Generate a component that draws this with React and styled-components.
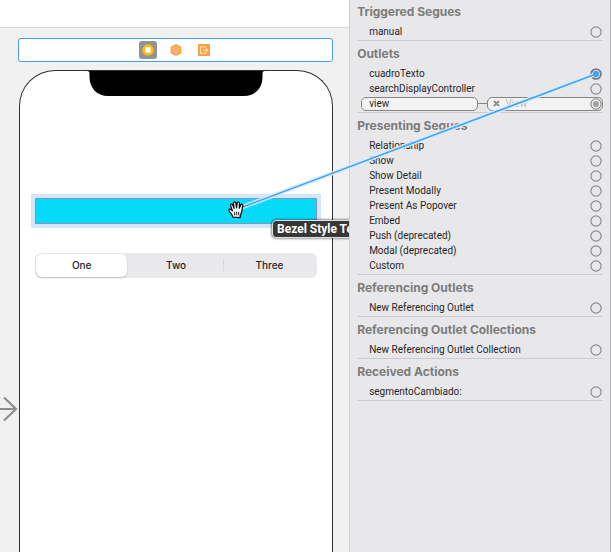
import React, { useState } from "react";
import styled, { createGlobalStyle, css } from "styled-components";

const GlobalStyle = createGlobalStyle`
  *, *::before, *::after { box-sizing: border-box; }
  body {
    margin: 0;
    font-family: Inter, "Liberation Sans", sans-serif;
    color: #262626;
    background: #f1f1f1;
  }
  button, input { font: inherit; color: inherit; }
`;

const Page = styled.div`
  position: relative;
  display: grid;
  grid-template-columns: minmax(0, 4fr) minmax(0, 3fr);
  min-height: 100vh;
  overflow: hidden;
`;

/* ---------- Canvas ---------- */

const Canvas = styled.main`
  position: relative;
  display: flex;
  flex-direction: column;
  overflow: hidden;
  background: #f1f1f1;
`;

const TopStrip = styled.div`
  height: 28px;
  background: #fff;
  border-bottom: 1px solid #dcdcdc;
`;

const Scene = styled.section`
  flex: 1;
  display: flex;
  flex-direction: column;
  gap: 8px;
  padding: 10px 16px 0 18px;
`;

const Dock = styled.div`
  display: flex;
  align-items: center;
  justify-content: center;
  gap: 10px;
  height: 24px;
  background: #fff;
  border: 1px solid #4a9bf5;
  border-radius: 3px;
`;

const DockButton = styled.button`
  display: grid;
  place-items: center;
  width: 18px;
  height: 18px;
  padding: 0;
  border: 0;
  border-radius: 3px;
  background: ${(p) => (p.$selected ? "#929292" : "transparent")};
`;

const Phone = styled.div`
  flex: 1;
  display: flex;
  flex-direction: column;
  margin-left: 1px;
  background: #fff;
  border: 1px solid #303030;
  border-bottom: 0;
  border-radius: 36px 36px 0 0;
`;

const Notch = styled.svg`
  display: block;
  align-self: center;
`;

const PhoneContent = styled.div`
  display: flex;
  flex-direction: column;
  gap: 29px;
  padding: 102px 15px 0;
`;

const FieldHolder = styled.div`
  position: relative;
`;

const BezelField = styled.input`
  display: block;
  width: 100%;
  height: 26px;
  padding: 0 6px;
  background: #05dbf9;
  border: 1px solid #7d99bd;
  border-radius: 0;
  outline: 4px solid #d6e5fb;
`;

const Tooltip = styled.div`
  position: absolute;
  top: 22px;
  left: 237px;
  padding: 0 4px;
  font-family: Roboto, "Liberation Sans", sans-serif;
  font-size: 12px;
  line-height: 16px;
  font-weight: 700;
  white-space: nowrap;
  color: #fff;
  background: #373737;
  border: 1px solid #e2e2e2;
  border-radius: 4px;
  box-shadow: 0 0 2px 1px rgba(0, 0, 0, 0.4);
`;

const Segments = styled.div`
  display: grid;
  grid-template-columns: repeat(3, 1fr);
  height: 25px;
  padding: 1px;
  background: #e9e9eb;
  border-radius: 6px;
`;

const Segment = styled.label`
  display: grid;
  place-items: center;
  padding-bottom: 1px;
  font-size: 10px;
  font-weight: 500;
  line-height: 14px;
  border-radius: 6px;
  ${(p) =>
    p.$selected &&
    css`
      margin-right: 2px;
      background: #fff;
      box-shadow: 0 1px 2px rgba(0, 0, 0, 0.2);
    `}
  ${(p) =>
    p.$divided &&
    css`
      background: linear-gradient(#dadadd, #dadadd) left center / 1px 13px no-repeat;
    `}
`;

const HiddenRadio = styled.input`
  position: absolute;
  opacity: 0;
  pointer-events: none;
`;

const EntryArrow = styled.svg`
  position: absolute;
  left: 0;
  top: 395px;
`;

/* ---------- Inspector ---------- */

const Inspector = styled.aside`
  padding: 0 8px 0 7px;
  margin-top: -1px;
  font-family: Roboto, "Liberation Sans", sans-serif;
  background: #e8e8ea;
  border-left: 1px solid #cfcfd1;
  border-right: 1px solid #b4b4b6;
`;

const Group = styled.section`
  display: flex;
  flex-direction: column;
`;

const GroupTitle = styled.h2`
  margin: 0;
  font-family: Inter, "Liberation Sans", sans-serif;
  font-size: 12px;
  line-height: 25px;
  font-weight: 700;
  color: #7b7b7b;
  white-space: nowrap;
`;

const Rows = styled.ul`
  margin: 0 0 0 1px;
  padding: 0 0 1px;
  list-style: none;
  border-bottom: 1px solid #cbcbcd;
`;

const Row = styled.li`
  display: flex;
  align-items: center;
  justify-content: space-between;
  height: 15px;
  padding-left: 11px;
  font-size: 10px;
  line-height: 14px;
`;

const LinkedRow = styled(Row)`
  display: grid;
  grid-template-columns: minmax(0, 1fr) 9px minmax(0, 1fr);
  padding-left: 3px;
  margin-right: -1px;
`;

const Pill = styled.div`
  display: flex;
  align-items: center;
  gap: 6px;
  height: 14px;
  padding: 0 0 0 ${(p) => (p.$target ? "5px" : "7px")};
  background: #f3f3f3;
  border: 1px solid #858585;
  border-radius: 5px;
  color: ${(p) => (p.$target ? "#b9b9b9" : "inherit")};
`;

const PillText = styled.span`
  flex: 1;
`;

const Connector = styled.span`
  height: 1px;
  background: #858585;
`;

const IconButton = styled.button`
  display: grid;
  place-items: center;
  flex: none;
  padding: 0;
  border: 0;
  background: none;
`;

const DragLine = styled.svg`
  position: absolute;
  top: 0;
  left: 0;
  pointer-events: none;
`;

/* ---------- Drawings ---------- */

function ControllerIcon() {
  return (
    <svg width="14" height="14" viewBox="0 0 14 14" aria-hidden="true">
      <circle cx="7" cy="7" r="5.8" fill="#fdbc0b" />
      <rect x="4.3" y="4.2" width="5.4" height="5.6" rx="0.6" fill="#fff" />
    </svg>
  );
}

function CubeIcon() {
  return (
    <svg width="14" height="14" viewBox="0 0 14 14" aria-hidden="true">
      <path d="M7 1 12.3 3.7V10.2L7 13 1.7 10.2V3.7Z" fill="#f9a040" />
      <path
        d="M3.3 5.1 6.2 6.5V11M10.7 5.1 7.8 6.5V11M4.2 9.3V7.2M9.8 9.3V7.2M4.5 3.8 7 5 9.5 3.8"
        fill="none"
        stroke="#fdd6a8"
        strokeWidth="0.9"
      />
    </svg>
  );
}

function ExitIcon() {
  return (
    <svg width="14" height="14" viewBox="0 0 14 14" aria-hidden="true">
      <rect x="1" y="1" width="12" height="12" rx="0.8" fill="#f9a040" />
      <path
        d="M8.6 5.2V3.8H3.6V10.4H8.6V9M6 7.1H11M9.3 5.3 11.1 7.1 9.3 8.9"
        fill="none"
        stroke="#fee0bb"
        strokeWidth="1.1"
      />
    </svg>
  );
}

function Ring({ state }) {
  const active = state === "active";
  return (
    <svg width="12" height="12" viewBox="0 0 12 12" aria-hidden="true">
      <circle
        cx="6"
        cy="6"
        r={active ? 4.9 : 5.1}
        fill={active ? "#e8e8ea" : "none"}
        stroke={active ? "#77797c" : "#8b8b8d"}
        strokeWidth={active ? 1.9 : 1.2}
      />
      {active && <circle cx="6" cy="6" r="3" fill="#3aa9fb" />}
      {state === "linked" && <circle cx="6" cy="6" r="3.1" fill="#a3a3a3" />}
    </svg>
  );
}

function HandCursor() {
  return (
    <g transform="translate(228 201)">
      <path
        d="M5.2 16.2C4.4 13.8 2.2 11.6 1 9.6 0.3 8.2 1.8 7.5 3 8.5L4.4 9.8 2.6 4.6C2.1 3 4 2.4 4.6 3.8L6.1 7.3 5.5 2.2C5.3.5 7.4.3 7.8 1.9L8.6 6.8 9.2 2C9.4.5 11.4.7 11.4 2.3L11.3 7.2 12.7 4C13.3 2.6 15.1 3.2 14.8 4.7 14.2 7.4 14.2 9.8 13.2 12.2L12.2 14.2V16.6Z"
        fill="#fff"
        stroke="#000"
        strokeWidth="1.2"
        strokeLinejoin="round"
      />
      <path d="M6.6 10.8V14.3M8.7 10.8V14.3M10.7 10.8V14.3" stroke="#000" strokeWidth="0.9" />
    </g>
  );
}

/* ---------- Page ---------- */

const groups = [
  { title: "Triggered Segues", rows: [{ name: "manual" }] },
  {
    title: "Outlets",
    rows: [
      { name: "cuadroTexto", state: "active" },
      { name: "searchDisplayController" },
      { name: "view", state: "linked", target: "View" },
    ],
  },
  {
    title: "Presenting Segues",
    rows: [
      { name: "Relationship" },
      { name: "Show" },
      { name: "Show Detail" },
      { name: "Present Modally" },
      { name: "Present As Popover" },
      { name: "Embed" },
      { name: "Push (deprecated)" },
      { name: "Modal (deprecated)" },
      { name: "Custom" },
    ],
  },
  { title: "Referencing Outlets", rows: [{ name: "New Referencing Outlet" }] },
  {
    title: "Referencing Outlet Collections",
    rows: [{ name: "New Referencing Outlet Collection" }],
  },
  { title: "Received Actions", rows: [{ name: "segmentoCambiado:" }] },
];

const segments = ["One", "Two", "Three"];

function ConnectionRow({ name, state, target }) {
  const ring = (
    <IconButton type="button" aria-label={`Connect ${name}`}>
      <Ring state={state} />
    </IconButton>
  );
  if (!target) {
    return (
      <Row>
        <span>{name}</span>
        {ring}
      </Row>
    );
  }
  return (
    <LinkedRow>
      <Pill>{name}</Pill>
      <Connector />
      <Pill $target>
        <IconButton type="button" aria-label={`Disconnect ${name}`}>
          <svg width="7" height="7" viewBox="0 0 7 7" aria-hidden="true">
            <path d="M1 1 6 6M6 1 1 6" stroke="#929292" strokeWidth="2" />
          </svg>
        </IconButton>
        <PillText>{target}</PillText>
        {ring}
      </Pill>
    </LinkedRow>
  );
}

export default function App() {
  const [selected, setSelected] = useState("One");
  const selectedIndex = segments.indexOf(selected);

  return (
    <>
      <GlobalStyle />
      <Page>
        <Canvas>
          <TopStrip />
          <Scene>
            <Dock>
              <DockButton type="button" aria-label="View Controller" $selected>
                <ControllerIcon />
              </DockButton>
              <DockButton type="button" aria-label="First Responder">
                <CubeIcon />
              </DockButton>
              <DockButton type="button" aria-label="Exit">
                <ExitIcon />
              </DockButton>
            </Dock>
            <Phone>
              <Notch width="178" height="25" viewBox="0 0 178 25" aria-hidden="true">
                <path d="M0 0H178C176 0 175.500 1 175.500 3V6C175.500 17 168 25 157 25H21C10 25 2.500 17 2.500 6V3C2.500 1 2 0 0 0Z" />
              </Notch>
              <PhoneContent>
                <FieldHolder>
                  <BezelField type="text" aria-label="Bezel Style Text Field" />
                  <Tooltip role="tooltip">Bezel Style Text Field</Tooltip>
                </FieldHolder>
                <Segments role="radiogroup" aria-label="Segments">
                  {segments.map((name, i) => (
                    <Segment
                      key={name}
                      $selected={name === selected}
                      $divided={i > 0 && i !== selectedIndex && i - 1 !== selectedIndex}
                    >
                      <HiddenRadio
                        type="radio"
                        name="segment"
                        checked={name === selected}
                        onChange={() => setSelected(name)}
                      />
                      {name}
                    </Segment>
                  ))}
                </Segments>
              </PhoneContent>
            </Phone>
          </Scene>
          <EntryArrow width="18" height="28" viewBox="0 0 18 28" aria-hidden="true">
            <path d="M0 14H16M4 2.500 16 14 4 25.500" fill="none" stroke="#8e8e8e" strokeWidth="2.200" />
          </EntryArrow>
        </Canvas>

        <Inspector>
          {groups.map((group) => (
            <Group key={group.title}>
              <GroupTitle>{group.title}</GroupTitle>
              <Rows>
                {group.rows.map((row) => (
                  <ConnectionRow key={row.name} {...row} />
                ))}
              </Rows>
            </Group>
          ))}
        </Inspector>

        <DragLine width="611" height="552" viewBox="0 0 611 552" aria-hidden="true">
          <path d="M596 74 240 208" stroke="#dceafa" strokeOpacity="0.85" strokeWidth="4.500" />
          <path d="M596 74 240 208" stroke="#38a6fa" strokeWidth="1.500" />
          <circle cx="596" cy="74" r="3" fill="#38a6fa" />
          <HandCursor />
        </DragLine>
      </Page>
    </>
  );
}
